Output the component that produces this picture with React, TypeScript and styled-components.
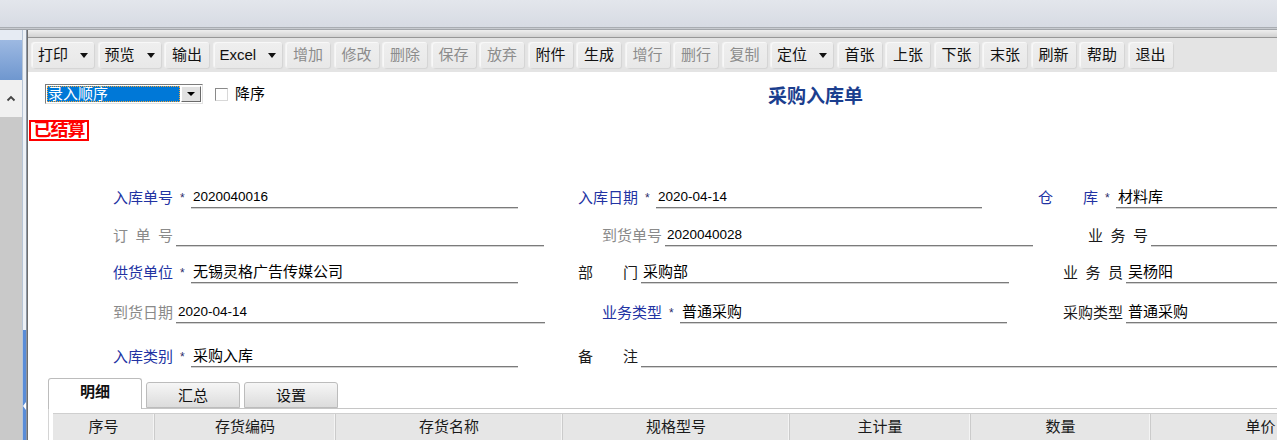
import React from "react";
import styled, { createGlobalStyle } from "styled-components";

const Global = createGlobalStyle`
  html, body { margin: 0; padding: 0; background: #fff; }
  body {
    font-family: "Liberation Sans", "Noto Sans CJK SC", sans-serif;
    font-size: 15px;
    color: #000;
    overflow: hidden;
  }
  * { box-sizing: border-box; }
`;

const Page = styled.div`
  width: 1277px;
  height: 440px;
  display: flex;
  flex-direction: column;
  overflow: hidden;
`;

const TopBand = styled.div`
  flex: none;
  height: 27px;
  background: linear-gradient(#e3e6ec, #d7dbe3);
`;

const TopSep = styled.div`
  flex: none;
  height: 3px;
  background: linear-gradient(#9a9ea4, #c7cacf, #8f9398);
`;

const Window = styled.div`
  flex: 1;
  display: flex;
  min-height: 0;
`;

const LeftPanel = styled.div`
  flex: none;
  width: 22px;
  display: flex;
  flex-direction: column;
  background: #c9c9c9;
`;

const LeftHeader = styled.div`
  flex: none;
  height: 50px;
  background: linear-gradient(#e6ebf3 0, #e6ebf3 10px, #9db9e2 10px, #6f97cf 50px);
`;

const ScrollUp = styled.div`
  flex: none;
  height: 37px;
  background: #f0f0f0;
  display: flex;
  align-items: center;
  justify-content: center;
`;

const Splitter = styled.div`
  flex: none;
  width: 5px;
  display: flex;
  flex-direction: column;
  background: #edf1f6;
  border-left: 1px solid #b7c5d6;
  border-right: 1px solid #8d96a3;
`;

const SplitterTop = styled.div`
  flex: none;
  height: 300px;
`;

const SplitterGrip = styled.div`
  flex: 1;
  background: #5a8dd8;
  display: flex;
  justify-content: center;
  padding-top: 72px;
`;

const GripArrow = styled.div`
  width: 0;
  height: 0;
  border-top: 4px solid transparent;
  border-bottom: 4px solid transparent;
  border-right: 3px solid #fff;
`;

const Main = styled.div`
  flex: 1;
  min-width: 0;
  display: flex;
  flex-direction: column;
  border-left: 1px solid #6e6e6e;
`;

const TopStrip = styled.div`
  flex: none;
  height: 8px;
  background: linear-gradient(#eeeeee, #d2d2d2);
  border-bottom: 1px solid #979797;
`;

const Toolbar = styled.div`
  flex: none;
  height: 34px;
  background: #e4e4e4;
  display: flex;
  align-items: flex-start;
  gap: 4.5px;
  padding: 4px 0 0 4px;
  white-space: nowrap;
`;

const ToolButton = styled.div<{ $w: number; $disabled?: boolean; $drop?: boolean }>`
  flex: none;
  width: ${(p) => p.$w}px;
  height: 26px;
  border-radius: 3px;
  background: linear-gradient(#efefef, #e8e8e8);
  box-shadow: inset 1px 1px 0 #f8f8f8, 1px 1px 1px rgba(0, 0, 0, 0.07), -1px 0 1px rgba(255, 255, 255, 0.6);
  display: flex;
  align-items: center;
  justify-content: ${(p) => (p.$drop ? "space-between" : "center")};
  padding: 0 6px;
  font-size: 15px;
  line-height: 26px;
  color: ${(p) => (p.$disabled ? "#8c8c8c" : "#111")};
`;

const DropArrow = styled.span`
  width: 0;
  height: 0;
  border-left: 4px solid transparent;
  border-right: 4px solid transparent;
  border-top: 5px solid #111;
`;

const Content = styled.div`
  flex: 1;
  background: #fff;
  display: flex;
  flex-direction: column;
  padding-left: 1px;
  min-height: 0;
`;

const TopRow = styled.div`
  display: flex;
  align-items: center;
  height: 20px;
  margin: 12px 0 0 16px;
`;

const Combo = styled.div`
  width: 158px;
  height: 20px;
  display: flex;
  border: 1px solid;
  border-color: #7c7c7c #e3e3e3 #e3e3e3 #7c7c7c;
  padding: 1px;
  background: #fff;
`;

const ComboText = styled.div`
  flex: 1;
  background: #0078d7;
  color: #fff;
  outline: 1px dotted #f3a53a;
  outline-offset: -1px;
  font-size: 15px;
  line-height: 16px;
  padding-left: 1px;
  margin-right: 1px;
`;

const ComboButton = styled.div`
  width: 20px;
  display: flex;
  align-items: center;
  justify-content: center;
  background: #e1e1e1;
  border: 1px solid;
  border-color: #fdfdfd #6a6a6a #6a6a6a #fdfdfd;
`;

const ComboArrow = styled.span`
  width: 0;
  height: 0;
  border-left: 4px solid transparent;
  border-right: 4px solid transparent;
  border-top: 4px solid #000;
`;

const CheckBox = styled.span`
  width: 13px;
  height: 13px;
  margin-left: 12px;
  border: 1px solid;
  border-color: #8a8a8a #d8d8d8 #d8d8d8 #8a8a8a;
  background: #fff;
`;

const CheckLabel = styled.span`
  margin-left: 7px;
  font-size: 15px;
  line-height: 20px;
`;

const Title = styled.h1`
  margin: 6px 0 0 503px;
  font-size: 19px;
  line-height: 20px;
  font-weight: bold;
  color: #1b3e8e;
  white-space: nowrap;
`;

const Stamp = styled.div`
  align-self: flex-start;
  margin-top: 16px;
  width: 60px;
  height: 21px;
  border: 2px solid #ff0000;
  color: #ff0000;
  font-weight: bold;
  font-size: 18px;
  line-height: 17px;
  text-align: center;
  letter-spacing: -1px;
  white-space: nowrap;
  overflow: hidden;
`;

const Form = styled.div`
  margin-top: 45px;
  padding-left: 84px;
  display: grid;
  grid-template-columns: 465px 460px 1fr;
  grid-template-rows: 22px 38px 37px 40px 44px;
  align-items: end;
`;

const FieldBox = styled.div<{ $indent?: number; $span?: boolean }>`
  display: flex;
  align-items: flex-end;
  height: 22px;
  margin-left: ${(p) => p.$indent ?? 0}px;
  ${(p) => (p.$span ? "grid-column: 2 / -1;" : "")}
  min-width: 0;
`;

type Tone = "blue" | "gray" | "dark";
const toneColor: Record<Tone, string> = {
  blue: "#2233a3",
  gray: "#8a8a8a",
  dark: "#1a1a1a",
};

const Label = styled.span<{ $tone: Tone }>`
  flex: none;
  width: 60px;
  font-size: 15px;
  line-height: 20px;
  text-align: justify;
  text-align-last: justify;
  color: ${(p) => toneColor[p.$tone]};
`;

const Star = styled.span`
  flex: none;
  width: 18px;
  padding-left: 7px;
  font-size: 12px;
  line-height: 20px;
  padding-top: 3px;
  color: #2b2b6a;
`;

const Gap = styled.span`
  flex: none;
  width: 3px;
`;

const Line = styled.div<{ $w?: number; $num?: boolean }>`
  ${(p) => (p.$w ? `flex: none; width: ${p.$w}px;` : "flex: 1;")}
  height: 21px;
  border-bottom: 1px solid #7b7b7b;
  box-shadow: 0 1px 0 #d2d2d2;
  padding-left: 2px;
  font-size: ${(p) => (p.$num ? "13.5px" : "15px")};
  line-height: 19px;
  white-space: nowrap;
  overflow: hidden;
`;

const TabStrip = styled.div`
  margin: 11px 0 0 19px;
  height: 31px;
  display: flex;
  align-items: flex-end;
  gap: 4px;
  border-bottom: 1px solid #c6c6c6;
`;

const Tab = styled.div<{ $active?: boolean }>`
  flex: none;
  width: 94px;
  height: ${(p) => (p.$active ? "31px" : "26px")};
  margin-bottom: ${(p) => (p.$active ? "-1px" : "0")};
  border: 1px solid #bcbcbc;
  border-bottom: ${(p) => (p.$active ? "none" : "1px solid #bcbcbc")};
  border-radius: 3px 3px 0 0;
  background: ${(p) => (p.$active ? "#fff" : "linear-gradient(#f6f6f6, #dcdcdc)")};
  font-size: 15px;
  font-weight: ${(p) => (p.$active ? "bold" : "normal")};
  line-height: 26px;
  text-align: center;
  color: #111;
`;

const TabPanel = styled.div`
  margin-left: 19px;
  border-left: 1px solid #d4d4d4;
  padding: 4px 0 0 4px;
  flex: 1;
`;

const HeaderRow = styled.div`
  display: grid;
  grid-template-columns: 102px 181px 227px 227px 181px 180px 220px;
  height: 27px;
  background: #e6e6e6;
  border-top: 1px solid #cfcfcf;
`;

const HeaderCell = styled.div`
  border-right: 1px solid #cbcbcb;
  box-shadow: inset -1px 0 0 #f4f4f4;
  text-align: center;
  font-size: 15px;
  line-height: 26px;
  color: #1a1a1a;
  white-space: nowrap;
`;

type Btn = { t: string; w: number; d?: boolean; drop?: boolean };
const buttons: Btn[] = [
  { t: "打印", w: 62, drop: true },
  { t: "预览", w: 62, drop: true },
  { t: "输出", w: 44 },
  { t: "Excel", w: 68, drop: true },
  { t: "增加", w: 44, d: true },
  { t: "修改", w: 44, d: true },
  { t: "删除", w: 44, d: true },
  { t: "保存", w: 44, d: true },
  { t: "放弃", w: 44, d: true },
  { t: "附件", w: 44 },
  { t: "生成", w: 44 },
  { t: "增行", w: 44, d: true },
  { t: "删行", w: 44, d: true },
  { t: "复制", w: 44, d: true },
  { t: "定位", w: 62, drop: true },
  { t: "首张", w: 44 },
  { t: "上张", w: 44 },
  { t: "下张", w: 44 },
  { t: "末张", w: 44 },
  { t: "刷新", w: 44 },
  { t: "帮助", w: 44 },
  { t: "退出", w: 44 },
];

type FieldProps = {
  label: string;
  tone: Tone;
  star?: boolean;
  value?: string;
  num?: boolean;
  line?: number;
  indent?: number;
  span?: boolean;
};

const Field = ({ label, tone, star, value, num, line, indent, span }: FieldProps) => (
  <FieldBox $indent={indent} $span={span}>
    <Label $tone={tone}>{label}</Label>
    {star ? <Star>*</Star> : <Gap />}
    <Line $w={line} $num={num}>
      {value}
    </Line>
  </FieldBox>
);

const headers = ["序号", "存货编码", "存货名称", "规格型号", "主计量", "数量", "单价"];

export default function App() {
  return (
    <Page>
      <Global />
      <TopBand />
      <TopSep />
      <Window>
        <LeftPanel>
          <LeftHeader />
          <ScrollUp>
            <svg width="10" height="7" viewBox="0 0 10 7">
              <polyline points="1.5,5.5 5,2 8.5,5.5" fill="none" stroke="#444" strokeWidth="1.8" />
            </svg>
          </ScrollUp>
        </LeftPanel>
        <Splitter>
          <SplitterTop />
          <SplitterGrip>
            <GripArrow />
          </SplitterGrip>
        </Splitter>
        <Main>
          <TopStrip />
          <Toolbar>
            {buttons.map((b) => (
              <ToolButton key={b.t} $w={b.w} $disabled={b.d} $drop={b.drop}>
                <span>{b.t}</span>
                {b.drop && <DropArrow />}
              </ToolButton>
            ))}
          </Toolbar>
          <Content>
            <TopRow>
              <Combo>
                <ComboText>录入顺序</ComboText>
                <ComboButton>
                  <ComboArrow />
                </ComboButton>
              </Combo>
              <CheckBox />
              <CheckLabel>降序</CheckLabel>
              <Title>采购入库单</Title>
            </TopRow>
            <Stamp>已结算</Stamp>
            <Form>
              <Field label="入库单号" tone="blue" star value="2020040016" num line={327} />
              <Field label="入库日期" tone="blue" star value="2020-04-14" num line={326} />
              <Field label="仓 库" tone="blue" star value="材料库" />

              <Field label="订 单 号" tone="gray" line={368} />
              <Field label="到货单号" tone="gray" value="2020040028" num line={368} indent={24} />
              <Field label="业 务 号" tone="dark" indent={50} />

              <Field label="供货单位" tone="blue" star value="无锡灵格广告传媒公司" line={327} />
              <Field label="部 门" tone="dark" value="采购部" line={368} />
              <Field label="业 务 员" tone="dark" value="吴杨阳" indent={25} />

              <Field label="到货日期" tone="gray" value="2020-04-14" num line={369} />
              <Field label="业务类型" tone="blue" star value="普通采购" line={327} indent={24} />
              <Field label="采购类型" tone="dark" value="普通采购" indent={25} />

              <Field label="入库类别" tone="blue" star value="采购入库" line={327} />
              <Field label="备 注" tone="dark" span />
            </Form>
            <TabStrip>
              <Tab $active>明细</Tab>
              <Tab>汇总</Tab>
              <Tab>设置</Tab>
            </TabStrip>
            <TabPanel>
              <HeaderRow>
                {headers.map((h) => (
                  <HeaderCell key={h}>{h}</HeaderCell>
                ))}
              </HeaderRow>
            </TabPanel>
          </Content>
        </Main>
      </Window>
    </Page>
  );
}
